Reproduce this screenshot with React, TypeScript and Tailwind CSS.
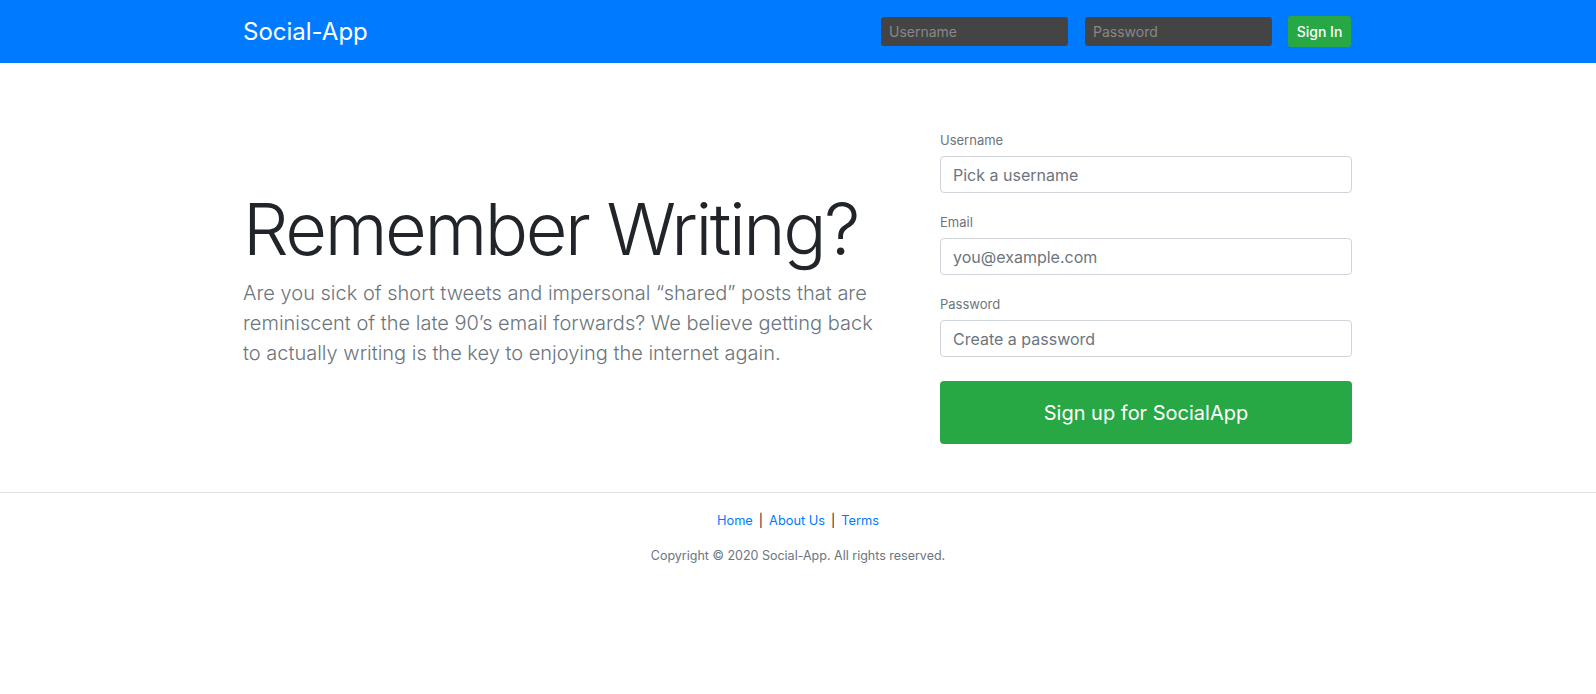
export default function App() {
  return (
    <div className="min-h-screen bg-white font-['Inter','Liberation_Sans',sans-serif] text-[#212529]">
      <header className="bg-[#007bff] py-4">
        <div className="mx-auto w-[1140px] px-[15px] flex items-center justify-between">
          <h4 className="text-white text-[24px] leading-[29px] font-normal">Social-App</h4>
          <form className="mr-[2px] flex items-center">
            <input
              type="text"
              placeholder="Username"
              className="w-[187px] h-[29px] rounded-[3px] bg-[#444] px-2 text-[14px] text-white placeholder:text-[#888] outline-none"
            />
            <input
              type="password"
              placeholder="Password"
              className="ml-[17px] w-[187px] h-[29px] rounded-[3px] bg-[#444] px-2 text-[14px] text-white placeholder:text-[#888] outline-none"
            />
            <button className="ml-4 h-[31px] w-[63px] rounded-[3px] bg-[#28a745] text-[14px] font-medium text-white">
              Sign In
            </button>
          </form>
        </div>
      </header>

      <main className="mx-auto w-[1140px] pt-[68px] pb-[48px]">
        <div className="flex items-center">
          <div className="w-7/12 px-[15px] pb-[22px]">
            <h1 className="whitespace-nowrap text-[72px] leading-[86px] font-light tracking-[-2.4px]">
              Remember Writing?
            </h1>
            <p className="mt-[6px] text-[20px] leading-[30px] font-light text-[#6c757d]">
              Are you sick of short tweets and impersonal “shared” posts that are reminiscent of the late 90’s
              email forwards? We believe getting back to actually writing is the key to enjoying the internet
              again.
            </p>
          </div>
          <div className="w-5/12 pl-[47px] pr-[16px]">
            <form>
              <div className="mb-5">
                <label className="block mb-[6px] text-[13px] leading-[19px] text-[#6c757d]">Username</label>
                <input
                  type="text"
                  placeholder="Pick a username"
                  className="w-full h-[37px] rounded-[4px] border border-[#ced4da] px-3 text-[16px] placeholder:text-[#6c757d] outline-none"
                />
              </div>
              <div className="mb-5">
                <label className="block mb-[6px] text-[13px] leading-[19px] text-[#6c757d]">Email</label>
                <input
                  type="text"
                  placeholder="you@example.com"
                  className="w-full h-[37px] rounded-[4px] border border-[#ced4da] px-3 text-[16px] placeholder:text-[#6c757d] outline-none"
                />
              </div>
              <div>
                <label className="block mb-[6px] text-[13px] leading-[19px] text-[#6c757d]">Password</label>
                <input
                  type="password"
                  placeholder="Create a password"
                  className="w-full h-[37px] rounded-[4px] border border-[#ced4da] px-3 text-[16px] placeholder:text-[#6c757d] outline-none"
                />
              </div>
              <button className="mt-6 w-full h-[63px] rounded-[4px] bg-[#28a745] text-[20px] text-white">
                Sign up for SocialApp
              </button>
            </form>
          </div>
        </div>
      </main>

      <footer className="border-t border-[#dee2e6] pt-[18px] text-center text-[12.8px] leading-[19px]">
        <p className="mb-4">
          <a href="#" className="text-[#007bff]">Home</a>
          <span className="mx-[6px]">|</span>
          <a href="#" className="text-[#007bff]">About Us</a>
          <span className="mx-[6px]">|</span>
          <a href="#" className="text-[#007bff]">Terms</a>
        </p>
        <p className="text-[12.5px] text-[#6c757d]">Copyright © 2020 Social-App. All rights reserved.</p>
      </footer>
    </div>
  );
}
